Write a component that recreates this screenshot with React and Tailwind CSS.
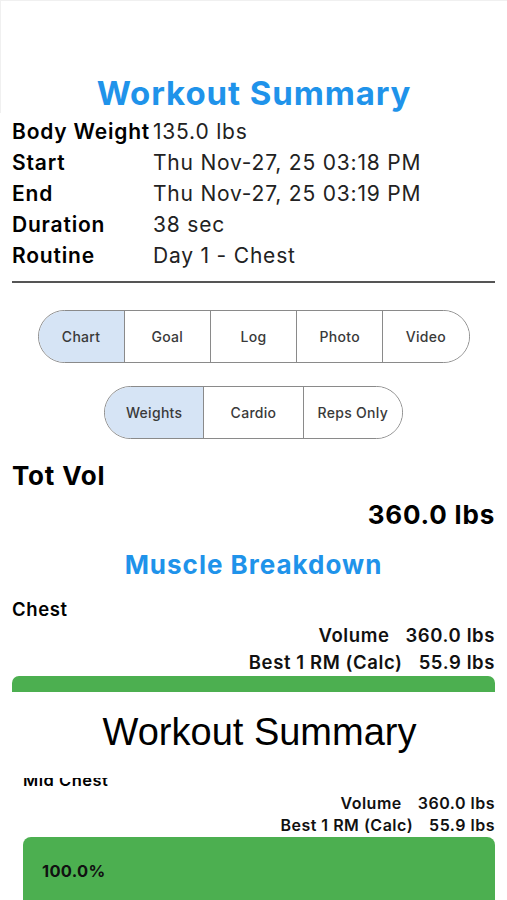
import React from "react";

const details = [
  { label: "Body Weight", value: "135.0 lbs" },
  { label: "Start", value: "Thu Nov-27, 25 03:18 PM" },
  { label: "End", value: "Thu Nov-27, 25 03:19 PM" },
  { label: "Duration", value: "38 sec" },
  { label: "Routine", value: "Day 1 - Chest" },
];

const tabs = ["Chart", "Goal", "Log", "Photo", "Video"];
const types = ["Weights", "Cardio", "Reps Only"];

function Segmented({ items, width }) {
  return (
    <div
      className={`flex h-[53px] overflow-hidden rounded-full border-[1.5px] border-[#8a8a8a] ${width}`}
    >
      {items.map((item, i) => (
        <div
          key={item}
          className={`flex flex-1 items-center justify-center text-[14px] font-medium tracking-[0.3px] text-[#3a3a3a] ${
            i === 0 ? "bg-[#d6e4f5]" : "border-l-[1.5px] border-[#8a8a8a] bg-white"
          }`}
        >
          {item}
        </div>
      ))}
    </div>
  );
}

function StatLine({ label, value, small }) {
  return (
    <div
      className={`flex justify-end font-semibold text-[#111] ${
        small
          ? "gap-[16px] text-[16px] leading-[22px] tracking-[0.5px]"
          : "gap-[16px] text-[18.5px] leading-[27px] tracking-[0.6px]"
      }`}
    >
      <span>{label}</span>
      <span>{value}</span>
    </div>
  );
}

export default function App() {
  return (
    <div className="min-h-[900px] w-[507px] overflow-hidden bg-white font-['Inter',sans-serif] text-black">
      {/* top screen */}
      <div className="border-l border-t border-[#f0f0f0] pt-[72px]">
        <h1 className="text-center text-[33px] font-bold leading-[40px] tracking-[0.9px] text-[#1f93ea]">
          Workout Summary
        </h1>
      </div>

      {/* details */}
      <div className="px-3 pt-[3px]">
        {details.map((d) => (
          <div key={d.label} className="flex text-[21px] leading-[31px] tracking-[0.8px]">
            <span className="w-[141px] shrink-0 font-semibold">{d.label}</span>
            <span className="text-[#222]">{d.value}</span>
          </div>
        ))}
        <div className="mt-[10px] h-[2px] bg-[#555]" />
      </div>

      {/* segmented controls */}
      <div className="mt-[27px] flex flex-col items-center gap-[23px]">
        <Segmented items={tabs} width="w-[432px]" />
        <Segmented items={types} width="w-[299px]" />
      </div>

      {/* totals */}
      <div className="px-3 pt-[21px]">
        <div className="text-[26px] font-bold leading-[32px] tracking-[0.8px]">Tot Vol</div>
        <div className="mt-[7px] text-right text-[26px] font-bold leading-[32px] tracking-[0.8px]">
          360.0 lbs
        </div>
        <h2 className="mt-[18px] text-center text-[26px] font-bold leading-[32px] tracking-[1px] text-[#1f93ea]">
          Muscle Breakdown
        </h2>
        <div className="mt-[16px] text-[18.5px] font-semibold leading-[24px] tracking-[0.6px]">
          Chest
        </div>
        <div className="mt-[1px]">
          <StatLine label="Volume" value="360.0 lbs" />
          <StatLine label="Best 1 RM (Calc)" value="55.9 lbs" />
        </div>
        <div className="h-[16px] rounded-t-[7px] bg-[#4caf50]" />
      </div>

      {/* second screen nav bar */}
      <div className="flex h-[86px] items-center justify-center bg-white pb-[6px] pl-[12px]">
        <span className="font-['Liberation_Sans',sans-serif] text-[38px] leading-[44px]">
          Workout Summary
        </span>
      </div>

      <div className="pl-[23px] pr-3">
        <div className="flex h-[12px] items-end overflow-hidden">
          <span className="text-[16.5px] font-semibold leading-[20px] tracking-[0.5px]">
            Mid Chest
          </span>
        </div>
        <div className="mt-[2px]">
          <StatLine label="Volume" value="360.0 lbs" small />
          <StatLine label="Best 1 RM (Calc)" value="55.9 lbs" small />
        </div>
        <div className="mt-[1px] h-[80px] rounded-[8px] bg-[#4caf50] px-[19px] pt-[24px] text-[16.5px] font-bold leading-[20px] tracking-[0.3px] text-[#111]">
          100.0%
        </div>
      </div>
    </div>
  );
}
